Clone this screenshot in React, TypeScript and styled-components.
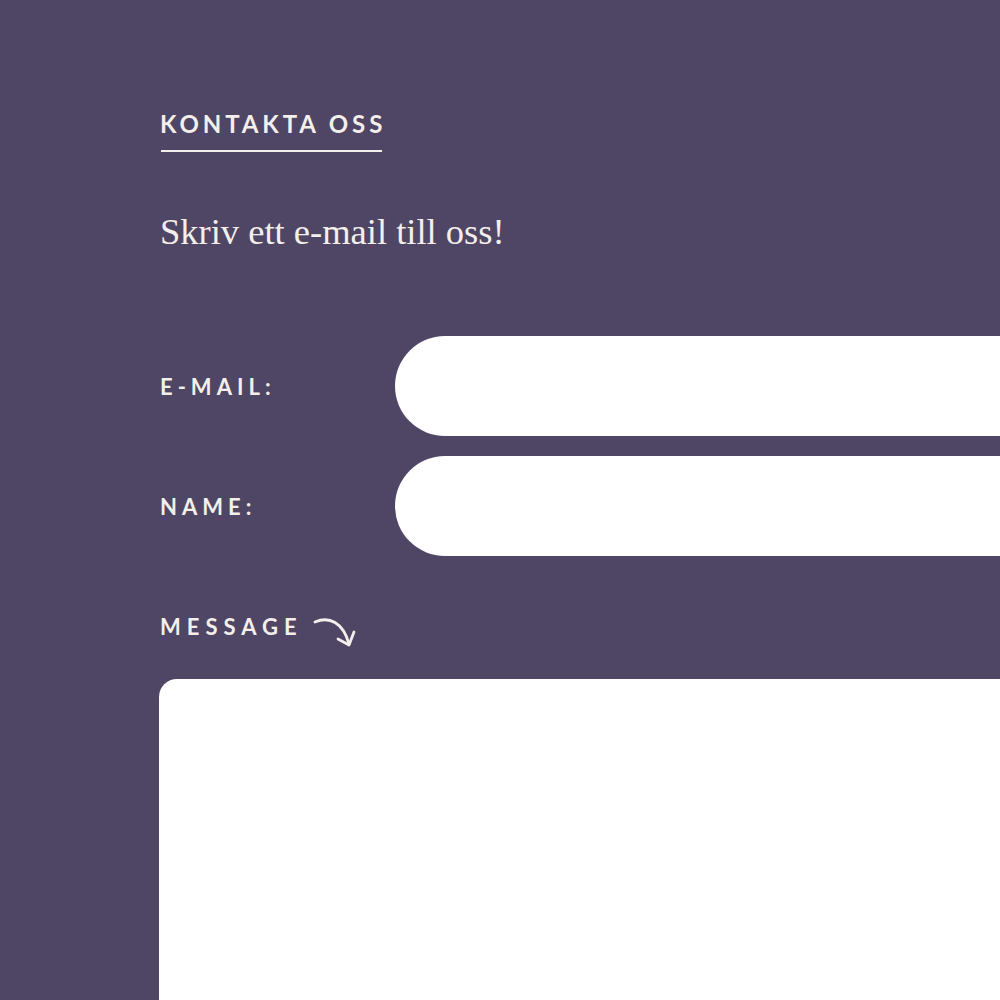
import React from "react";
import styled, { createGlobalStyle } from "styled-components";

const Global = createGlobalStyle`
  html, body { margin: 0; padding: 0; background: #4f4665; overflow: hidden; }
  * { box-sizing: border-box; }
`;

const Page = styled.div`
  width: 1000px;
  height: 1000px;
  overflow: hidden;
  background: #4f4665;
  padding: 110px 0 0 160px;
  color: #f4efea;
`;

const Title = styled.h2`
  position: relative;
  display: inline-block;
  margin: 0;
  padding-bottom: 14px;
  font-family: "Lato", "Liberation Sans", sans-serif;
  font-weight: 700;
  font-size: 24px;
  line-height: 28px;
  letter-spacing: 3.9px;
  &::after {
    content: "";
    position: absolute;
    left: 1px;
    bottom: 0;
    width: calc(100% - 5px);
    height: 2px;
    background: #f4efea;
  }
`;

const Lead = styled.p`
  margin: 60px 0 0;
  font-family: "Liberation Serif", serif;
  font-size: 36.5px;
  line-height: 40px;
  color: #f4efea;
`;

const Form = styled.form`
  margin-top: 84px;
  width: 1000px;
  display: flex;
  flex-direction: column;
`;

const Row = styled.div`
  display: flex;
  align-items: center;
  margin-bottom: 20px;
`;

const Label = styled.label`
  width: 235px;
  flex: none;
  font-family: "Lato", "Liberation Sans", sans-serif;
  font-weight: 700;
  font-size: 22px;
  letter-spacing: 5px;
  color: #f4efea;
`;

const Input = styled.input`
  flex: 1;
  height: 100px;
  border: none;
  outline: none;
  border-radius: 50px;
  background: #ffffff;
  padding: 0 40px;
  font-size: 20px;
`;

const MessageLabel = styled.div`
  display: flex;
  align-items: center;
  gap: 10px;
  margin-top: 26px;
  font-family: "Lato", "Liberation Sans", sans-serif;
  font-weight: 700;
  font-size: 22px;
  letter-spacing: 6px;
  color: #f4efea;
`;

const Arrow = styled.svg`
  width: 44px;
  height: 34px;
  margin-top: 14px;
  flex: none;
`;

const TextArea = styled.textarea`
  display: block;
  margin-top: 29px;
  margin-left: -1px;
  width: 1000px;
  height: 400px;
  border: none;
  outline: none;
  resize: none;
  border-radius: 18px;
  background: #ffffff;
`;

export default function App() {
  return (
    <>
      <Global />
      <Page>
        <Title>KONTAKTA OSS</Title>
        <Lead>Skriv ett e-mail till oss!</Lead>
        <Form>
          <Row>
            <Label>E-MAIL:</Label>
            <Input type="email" />
          </Row>
          <Row>
            <Label>NAME:</Label>
            <Input type="text" />
          </Row>
          <MessageLabel>
            MESSAGE
            <Arrow viewBox="0 0 44 34" fill="none" stroke="#f4efea" strokeWidth="2.8" strokeLinecap="round" strokeLinejoin="round">
              <path d="M2 6 C 16 0, 30 6, 36 28" />
              <path d="M25 23 L 36 29 L 41 16" />
            </Arrow>
          </MessageLabel>
          <TextArea />
        </Form>
      </Page>
    </>
  );
}
